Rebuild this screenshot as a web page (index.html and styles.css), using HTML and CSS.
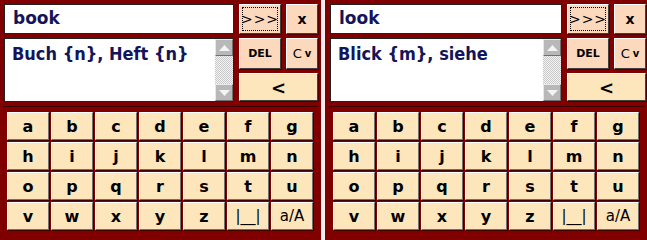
FILE: index.html
```html
<!DOCTYPE html>
<html>
<head>
<meta charset="utf-8">
<link rel="stylesheet" href="styles.css">
</head>
<body>
<div class="screen">
  <div class="panel">
    <div class="top">
      <div class="field word">book</div>
      <div class="btn pink go"><span class="focus">&gt;&gt;&gt;</span></div>
      <div class="btn pink close">x</div>
      <div class="field result">
        <div class="res-text">Buch {n}, Heft {n}</div>
        <div class="scroll">
          <div class="sbtn"><svg width="11" height="6" viewBox="0 0 11 6"><polygon points="0,6 11,6 5.5,0" fill="#f4f4f4"/></svg></div>
          <div class="track"></div>
          <div class="sbtn"><svg width="11" height="6" viewBox="0 0 11 6"><polygon points="0,0 11,0 5.5,6" fill="#f4f4f4"/></svg></div>
        </div>
      </div>
      <div class="btn pink small">DEL</div>
      <div class="btn pink small cv">C <span class="v">v</span></div>
      <div class="btn cream back">&lt;</div>
    </div>
    <div class="keys">
      <div class="key">a</div><div class="key">b</div><div class="key">c</div><div class="key">d</div><div class="key">e</div><div class="key">f</div><div class="key">g</div>
      <div class="key">h</div><div class="key">i</div><div class="key">j</div><div class="key">k</div><div class="key">l</div><div class="key">m</div><div class="key">n</div>
      <div class="key">o</div><div class="key">p</div><div class="key">q</div><div class="key">r</div><div class="key">s</div><div class="key">t</div><div class="key">u</div>
      <div class="key">v</div><div class="key">w</div><div class="key">x</div><div class="key">y</div><div class="key">z</div><div class="key thin">|__|</div><div class="key thin">a/A</div>
    </div>
  </div>
  <div class="sep"></div>
  <div class="panel">
    <div class="top">
      <div class="field word">look</div>
      <div class="btn pink go"><span class="focus">&gt;&gt;&gt;</span></div>
      <div class="btn pink close">x</div>
      <div class="field result">
        <div class="res-text">Blick {m}, siehe</div>
        <div class="scroll">
          <div class="sbtn"><svg width="11" height="6" viewBox="0 0 11 6"><polygon points="0,6 11,6 5.5,0" fill="#f4f4f4"/></svg></div>
          <div class="track"></div>
          <div class="sbtn"><svg width="11" height="6" viewBox="0 0 11 6"><polygon points="0,0 11,0 5.5,6" fill="#f4f4f4"/></svg></div>
        </div>
      </div>
      <div class="btn pink small">DEL</div>
      <div class="btn pink small cv">C <span class="v">v</span></div>
      <div class="btn cream back">&lt;</div>
    </div>
    <div class="keys">
      <div class="key">a</div><div class="key">b</div><div class="key">c</div><div class="key">d</div><div class="key">e</div><div class="key">f</div><div class="key">g</div>
      <div class="key">h</div><div class="key">i</div><div class="key">j</div><div class="key">k</div><div class="key">l</div><div class="key">m</div><div class="key">n</div>
      <div class="key">o</div><div class="key">p</div><div class="key">q</div><div class="key">r</div><div class="key">s</div><div class="key">t</div><div class="key">u</div>
      <div class="key">v</div><div class="key">w</div><div class="key">x</div><div class="key">y</div><div class="key">z</div><div class="key thin">|__|</div><div class="key thin">a/A</div>
    </div>
  </div>
</div>
</body>
</html>
```

FILE: styles.css
```css
html, body {
  margin: 0;
  padding: 0;
  background: #ffffff;
}
.screen {
  display: flex;
  width: 647px;
  height: 240px;
  font-family: "DejaVu Sans", Verdana, sans-serif;
}
.panel {
  width: 321px;
  height: 240px;
  background: #800000;
  box-sizing: border-box;
  padding: 4px 0 0 4px;
}
.panel + .sep + .panel {
  width: 322px;
  padding-left: 5px;
}
.sep {
  width: 4px;
  background: #f4f0f0;
}
.top {
  display: grid;
  grid-template-columns: 230px 42px 32px;
  grid-template-rows: 30px 31px 28px;
  column-gap: 5px;
  row-gap: 4px;
}
.panel + .sep + .panel .top {
  grid-template-columns: 232px 42px 32px;
}
.field {
  background: #ffffff;
  border: 1px solid #222;
  box-sizing: border-box;
  color: #14145a;
  font-weight: bold;
}
.word {
  font-size: 17px;
  line-height: 26px;
  padding-left: 8px;
}
.result {
  grid-row: 2 / 4;
  display: flex;
  height: 64px;
}
.res-text {
  flex: 1;
  font-family: "DejaVu Sans Condensed", "DejaVu Sans", sans-serif;
  font-size: 18px;
  padding: 4px 0 0 7px;
  line-height: 22px;
}
.scroll {
  width: 18px;
  display: flex;
  flex-direction: column;
}
.sbtn {
  height: 17px;
  background: #b8b8b8;
  border: 1px solid;
  border-color: #e8e8e8 #707070 #707070 #e8e8e8;
  box-sizing: border-box;
  display: flex;
  align-items: center;
  justify-content: center;
}
.track {
  flex: 1;
  background-color: #f0f0f0;
  background-image: repeating-conic-gradient(#c8c8c8 0 25%, #f4f4f4 0 50%);
  background-size: 2px 2px;
}
.btn {
  box-sizing: border-box;
  border: 1px solid;
  border-color: #ffffff #404040 #404040 #ffffff;
  box-shadow: 1px 1px 0 #500000;
  display: flex;
  align-items: center;
  justify-content: center;
  color: #000;
  font-family: "DejaVu Sans", Verdana, sans-serif;
}
.pink {
  background: #fcd8bc;
}
.cream {
  background: #fde6bc;
}
.go {
  padding: 2px;
  font-size: 14px;
}
.focus {
  border: 1px dotted #000;
  width: 100%;
  height: 100%;
  box-sizing: border-box;
  display: flex;
  align-items: center;
  justify-content: center;
  letter-spacing: 1px;
}
.close {
  font-weight: bold;
  font-size: 14px;
}
.small {
  font-size: 11px;
  font-weight: bold;
}
.cv {
  font-weight: normal;
  font-size: 13px;
}
.cv .v {
  font-weight: bold;
  font-size: 10px;
  margin-left: 3px;
}
.back {
  grid-column: 2 / 4;
  font-weight: bold;
  font-size: 18px;
}
.keys {
  margin: 5px 0 0 -1px;
  width: 311px;
  display: grid;
  grid-template-columns: repeat(7, 42px);
  grid-auto-rows: 28px;
  column-gap: 2px;
  row-gap: 2px;
  padding: 5px 0 0 3px;
  border-top: 1px solid #3a0000;
  border-left: 1px solid #3a0000;
}
.key {
  box-sizing: border-box;
  background: #fde6bc;
  border: 1px solid;
  border-color: #ffffff #707070 #707070 #ffffff;
  box-shadow: 1px 1px 0 #400000;
  display: flex;
  align-items: center;
  justify-content: center;
  font-size: 16px;
  font-weight: bold;
  color: #000;
}
.thin {
  font-weight: normal;
  font-size: 15px;
}
```
